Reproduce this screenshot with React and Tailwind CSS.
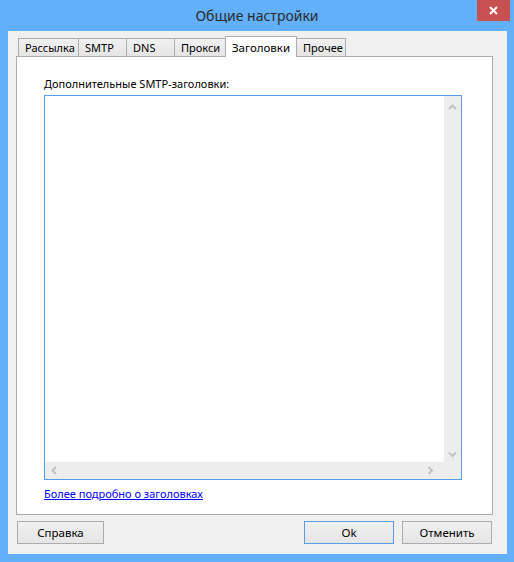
const tabs = [
  { label: "Рассылка", w: "w-[61px]" },
  { label: "SMTP", w: "w-[49px]" },
  { label: "DNS", w: "w-[49px]" },
  { label: "Прокси", w: "w-[52px]" },
  { label: "Заголовки", w: "w-[72px]", active: true },
  { label: "Прочее", w: "w-[50px]" },
];

function Chevron({ dir }) {
  const pts = {
    up: "1,5 4.5,1.5 8,5",
    down: "1,1.5 4.5,5 8,1.5",
    left: "5,1 1.5,4.5 5,8",
    right: "1.5,1 5,4.5 1.5,8",
  }[dir];
  const size = dir === "up" || dir === "down" ? { width: 9, height: 7 } : { width: 7, height: 9 };
  return (
    <svg {...size} viewBox={`0 0 ${size.width} ${size.height}`}>
      <polyline points={pts} fill="none" stroke="#c2c2c2" strokeWidth="2" />
    </svg>
  );
}

function Button({ children, primary }) {
  return (
    <button
      className={`h-[23px] w-full rounded-none border bg-gradient-to-b from-[#f0f0f0] to-[#e5e5e5] text-[11.5px] text-black ${
        primary ? "border-[#569de5]" : "border-[#acacac]"
      }`}
    >
      {children}
    </button>
  );
}

export default function App() {
  return (
    <div
      className="flex h-[562px] w-[514px] flex-col bg-[#61b0f9] text-[11px] text-black"
      style={{ fontFamily: '"Noto Sans", "Segoe UI", sans-serif' }}
    >
      {/* title bar */}
      <div className="relative flex h-[31px] items-center justify-center">
        <span className="pb-[1px] text-[14px] text-[#2b2b2b]">Общие настройки</span>
        <div className="absolute right-[4px] top-0 flex h-[21px] w-[33px] items-center justify-center bg-[#c75050]">
          <svg width="9" height="9" viewBox="0 0 9 9">
            <path d="M1 1 L8 8 M8 1 L1 8" stroke="#fff" strokeWidth="2" />
          </svg>
        </div>
      </div>

      {/* client area */}
      <div className="ml-[8px] mr-[7px] flex h-[523px] flex-col bg-[#f0f0f0] pl-[8px] pr-[15px] pt-[5px]">
        {/* tab strip */}
        <div className="flex h-[20px] items-end pl-[2px] text-[11px]">
          {tabs.map((t) =>
            t.active ? (
              <div
                key={t.label}
                className={`relative z-10 -mb-px -ml-px flex h-[21px] ${t.w} items-start justify-center border border-b-0 border-[#acacac] bg-white pt-[2px] text-[11.5px]`}
              >
                {t.label}
              </div>
            ) : (
              <div
                key={t.label}
                className={`-ml-px flex h-[18px] ${t.w} items-center border border-b-0 border-[#acacac] bg-gradient-to-b from-[#f0f0f0] to-[#e5e5e5] pl-[6px] pt-[2px] first:ml-0`}
              >
                {t.label}
              </div>
            )
          )}
        </div>

        {/* tab page */}
        <div className="flex h-[459px] w-[477px] flex-col border border-[#acacac] bg-white pl-[27px] pt-[19px]">
          <div className="h-[16px] leading-[16px]">Дополнительные SMTP-заголовки:</div>
          <div className="mt-[3px] grid h-[385px] w-[418px] grid-cols-[1fr_17px] grid-rows-[1fr_17px] border border-[#569de5]">
            <div className="bg-white" />
            <div className="flex flex-col items-center justify-between bg-[#ededed] pb-[4px] pt-[8px]">
              <Chevron dir="up" />
              <Chevron dir="down" />
            </div>
            <div className="flex items-center justify-between bg-[#ededed] pl-[6px] pr-[10px]">
              <Chevron dir="left" />
              <Chevron dir="right" />
            </div>
            <div className="bg-[#ededed]" />
          </div>
          <a href="#" className="mt-[6px] h-[16px] self-start leading-[16px] text-[#0000ff] underline">
            Более подробно о заголовках
          </a>
        </div>

        {/* buttons */}
        <div className="mt-[6px] flex">
          <div className="w-[88px] pl-px">
            <Button>Справка</Button>
          </div>
          <div className="flex-1" />
          <div className="flex gap-[8px]">
            <div className="w-[90px]">
              <Button primary>Ok</Button>
            </div>
            <div className="w-[90px]">
              <Button>Отменить</Button>
            </div>
          </div>
        </div>
      </div>
    </div>
  );
}
